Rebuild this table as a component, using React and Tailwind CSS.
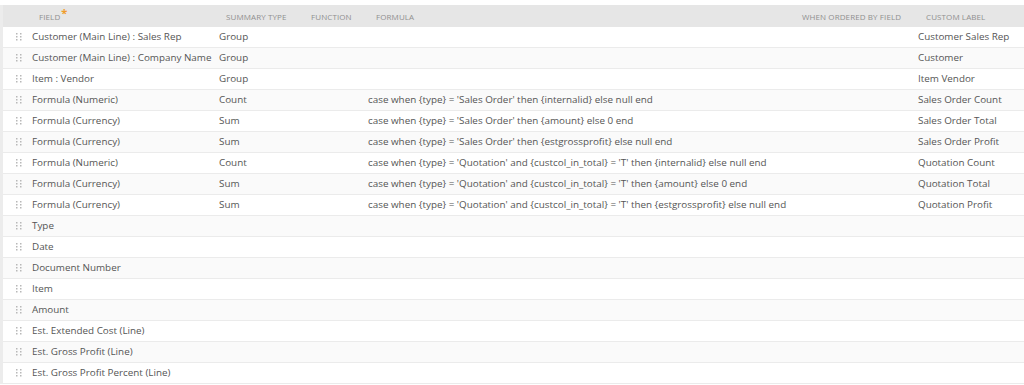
const rows = [
  ["Customer (Main Line) : Sales Rep", "Group", "", "", "Customer Sales Rep"],
  ["Customer (Main Line) : Company Name", "Group", "", "", "Customer"],
  ["Item : Vendor", "Group", "", "", "Item Vendor"],
  ["Formula (Numeric)", "Count", "case when {type} = 'Sales Order' then {internalid} else null end", "", "Sales Order Count"],
  ["Formula (Currency)", "Sum", "case when {type} = 'Sales Order' then {amount} else 0 end", "", "Sales Order Total"],
  ["Formula (Currency)", "Sum", "case when {type} = 'Sales Order' then {estgrossprofit} else null end", "", "Sales Order Profit"],
  ["Formula (Numeric)", "Count", "case when {type} = 'Quotation' and {custcol_in_total} = 'T' then {internalid} else null end", "", "Quotation Count"],
  ["Formula (Currency)", "Sum", "case when {type} = 'Quotation' and {custcol_in_total} = 'T' then {amount} else 0 end", "", "Quotation Total"],
  ["Formula (Currency)", "Sum", "case when {type} = 'Quotation' and {custcol_in_total} = 'T' then {estgrossprofit} else null end", "", "Quotation Profit"],
  ["Type", "", "", "", ""],
  ["Date", "", "", "", ""],
  ["Document Number", "", "", "", ""],
  ["Item", "", "", "", ""],
  ["Amount", "", "", "", ""],
  ["Est. Extended Cost (Line)", "", "", "", ""],
  ["Est. Gross Profit (Line)", "", "", "", ""],
  ["Est. Gross Profit Percent (Line)", "", "", "", ""],
];

function Handle() {
  return (
    <svg width="6" height="8" viewBox="0 0 6 8" className="block">
      {[0, 3, 6].map((y) =>
        [0, 4].map((x) => (
          <rect key={`${x}-${y}`} x={x} y={y} width="1.5" height="1.5" fill="#b8b8b8" />
        ))
      )}
    </svg>
  );
}

export default function App() {
  return (
    <div
      className="w-[1024px] h-[385px] overflow-hidden bg-white pt-[5px] text-[#555]"
      style={{ fontFamily: '"Open Sans", "Liberation Sans", sans-serif' }}
    >
      <div className="border-l-[3px] border-[#ececec]">
        {/* HEADER */}
        <div className="flex h-[22px] items-center bg-[#e6e6e6] pt-[1px] text-[8px] uppercase text-[#909090] tracking-[0.1px]">
          <div className="w-[29px] shrink-0" />
          <div className="w-[187px] shrink-0 pl-[7px]">
            Field<span className="relative -top-[3px] ml-[1px] text-[11px] font-bold text-[#f09c2a]">*</span>
          </div>
          <div className="w-[85px] shrink-0 pl-[7px]">Summary Type</div>
          <div className="w-[64px] shrink-0 pl-[7px]">Function</div>
          <div className="w-[427px] shrink-0 pl-[8px]">Formula</div>
          <div className="w-[123px] shrink-0 pl-[7px]">When Ordered by Field</div>
          <div className="flex-1 pl-[8px]">Custom Label</div>
        </div>

        {/* ROWS */}
        {rows.map(([field, summary, formula, ordered, label], i) => (
          <div
            key={i}
            className={`flex h-[21px] items-center border-b border-[#ebebeb] pb-[2px] text-[9.85px] whitespace-nowrap ${
              i % 2 === 1 ? "bg-[#fafafa]" : "bg-white"
            }`}
          >
            <div className="flex w-[29px] shrink-0 justify-center pl-[2px] pt-[2px]">
              <Handle />
            </div>
            <div className="w-[187px] shrink-0">{field}</div>
            <div className="w-[85px] shrink-0">{summary}</div>
            <div className="w-[64px] shrink-0" />
            <div className="w-[427px] shrink-0">{formula}</div>
            <div className="w-[123px] shrink-0">{ordered}</div>
            <div className="flex-1">{label}</div>
          </div>
        ))}
      </div>
    </div>
  );
}
